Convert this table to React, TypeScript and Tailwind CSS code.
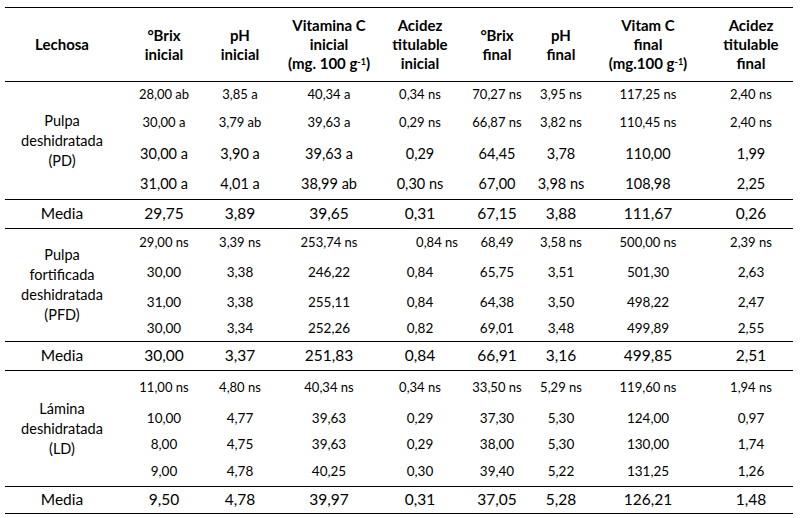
import React from "react";

type Cell = { t: string; s?: string };

const COLS = "grid grid-cols-[114px_90px_62px_116px_66px_88px_40px_134px_78px]";

const font = { fontFamily: "Lato, 'Open Sans', sans-serif" };

function DataCell({ c, last }: { c: Cell; last?: boolean }) {
  return (
    <div className={"flex items-center justify-center whitespace-nowrap text-black " + (last ? "pr-[6px] " : "") + (c.s ?? "text-[14px]")}>
      {c.t}
    </div>
  );
}

type Section = {
  label: string[];
  rowsCls: string;
  rows: Cell[][];
  h: string;
  media: string[];
  mediaH: string;
};

const sm = "text-[13px]";
const md = "text-[13.5px]";
const nm = "text-[14.5px]";

const mk = (vals: string[], s: string, extra: Record<number, string> = {}): Cell[] =>
  vals.map((t, i) => ({ t, s: s + (extra[i] ? " " + extra[i] : "") }));

const sections: Section[] = [
  {
    label: ["Pulpa", "deshidratada", "(PD)"],
    rowsCls: "grid-rows-[25px_31px_31px_30px]",
    h: "h-[118px]",
    rows: [
      mk(["28,00 ab", "3,85 a", "40,34 a", "0,34 ns", "70,27 ns", "3,95 ns", "117,25 ns", "2,40 ns"], sm),
      mk(["30,00 a", "3,79 ab", "39,63 a", "0,29 ns", "66,87 ns", "3,82 ns", "110,45 ns", "2,40 ns"], sm),
      mk(["30,00 a", "3,90 a", "39,63 a", "0,29", "64,45", "3,78", "110,00", "1,99"], nm),
      mk(["31,00 a", "4,01 a", "38,99 ab", "0,30 ns", "67,00", "3,98 ns", "108,98", "2,25"], nm),
    ],
    media: ["29,75", "3,89", "39,65", "0,31", "67,15", "3,88", "111,67", "0,26"],
    mediaH: "h-[29px]",
  },
  {
    label: ["Pulpa", "fortificada", "deshidratada", "(PFD)"],
    rowsCls: "grid-rows-[28px_31px_28px_25px]",
    h: "h-[113px]",
    rows: [
      mk(["29,00 ns", "3,39 ns", "253,74 ns", "0,84 ns", "68,49", "3,58 ns", "500,00 ns", "2,39 ns"], sm, { 3: "pl-[34px]" }),
      mk(["30,00", "3,38", "246,22", "0,84", "65,75", "3,51", "501,30", "2,63"], md),
      mk(["31,00", "3,38", "255,11", "0,84", "64,38", "3,50", "498,22", "2,47"], md),
      mk(["30,00", "3,34", "252,26", "0,82", "69,01", "3,48", "499,89", "2,55"], md),
    ],
    media: ["30,00", "3,37", "251,83", "0,84", "66,91", "3,16", "499,85", "2,51"],
    mediaH: "h-[29px]",
  },
  {
    label: ["Lámina", "deshidratada", "(LD)"],
    rowsCls: "grid-rows-[34px_26px_26px_29px]",
    h: "h-[116px]",
    rows: [
      mk(["11,00 ns", "4,80 ns", "40,34 ns", "0,34 ns", "33,50 ns", "5,29 ns", "119,60 ns", "1,94 ns"], sm),
      mk(["10,00", "4,77", "39,63", "0,29", "37,30", "5,30", "124,00", "0,97"], md),
      mk(["8,00", "4,75", "39,63", "0,29", "38,00", "5,30", "130,00", "1,74"], md),
      mk(["9,00", "4,78", "40,25", "0,30", "39,40", "5,22", "131,25", "1,26"], md),
    ],
    media: ["9,50", "4,78", "39,97", "0,31", "37,05", "5,28", "126,21", "1,48"],
    mediaH: "h-[27px]",
  },
];

function Header() {
  const hs: React.ReactNode[] = [
    <>Lechosa</>,
    <>°Brix<br />inicial</>,
    <>pH<br />inicial</>,
    <>Vitamina C<br />inicial<br />(mg. 100 g<sup className="text-[9px]">-1</sup>)</>,
    <>Acidez<br />titulable<br />inicial</>,
    <>°Brix<br />final</>,
    <>pH<br />final</>,
    <>Vitam C<br />final<br />(mg.100 g<sup className="text-[9px]">-1</sup>)</>,
    <>Acidez<br />titulable<br />final</>,
  ];
  return (
    <div className={COLS + " h-[74px] border-b border-black"}>
      {hs.map((h, i) => (
        <div
          key={i}
          className={"flex items-center justify-center whitespace-nowrap text-center text-[15px] font-bold leading-[19px] text-black " + (i === 8 ? "pr-[6px]" : "")}
        >
          <div>{h}</div>
        </div>
      ))}
    </div>
  );
}

export default function App() {
  return (
    <div className="min-h-[518px] w-[805px] bg-white pl-[5px] pt-[7px]" style={font}>
      <div className="w-[788px] border-t border-black">
        <Header />
        {sections.map((sec, si) => (
          <React.Fragment key={si}>
            <div className={COLS + " " + sec.rowsCls + " " + sec.h + " border-b border-black"}>
              <div className="row-span-4 flex items-center justify-center text-center text-[14.5px] leading-[20px] text-black">
                <div>
                  {sec.label.map((l, i) => (
                    <div key={i}>{l}</div>
                  ))}
                </div>
              </div>
              {sec.rows.map((r, ri) => (
                <React.Fragment key={ri}>
                  {r.map((c, ci) => (
                    <DataCell key={ci} c={c} last={ci === 7} />
                  ))}
                </React.Fragment>
              ))}
            </div>
            <div className={COLS + " " + sec.mediaH + " border-b border-black"}>
              <div className="flex items-center justify-center text-[15.5px] text-black">Media</div>
              {sec.media.map((m, mi) => (
                <DataCell key={mi} c={{ t: m, s: "text-[15.5px]" }} last={mi === 7} />
              ))}
            </div>
          </React.Fragment>
        ))}
      </div>
    </div>
  );
}
